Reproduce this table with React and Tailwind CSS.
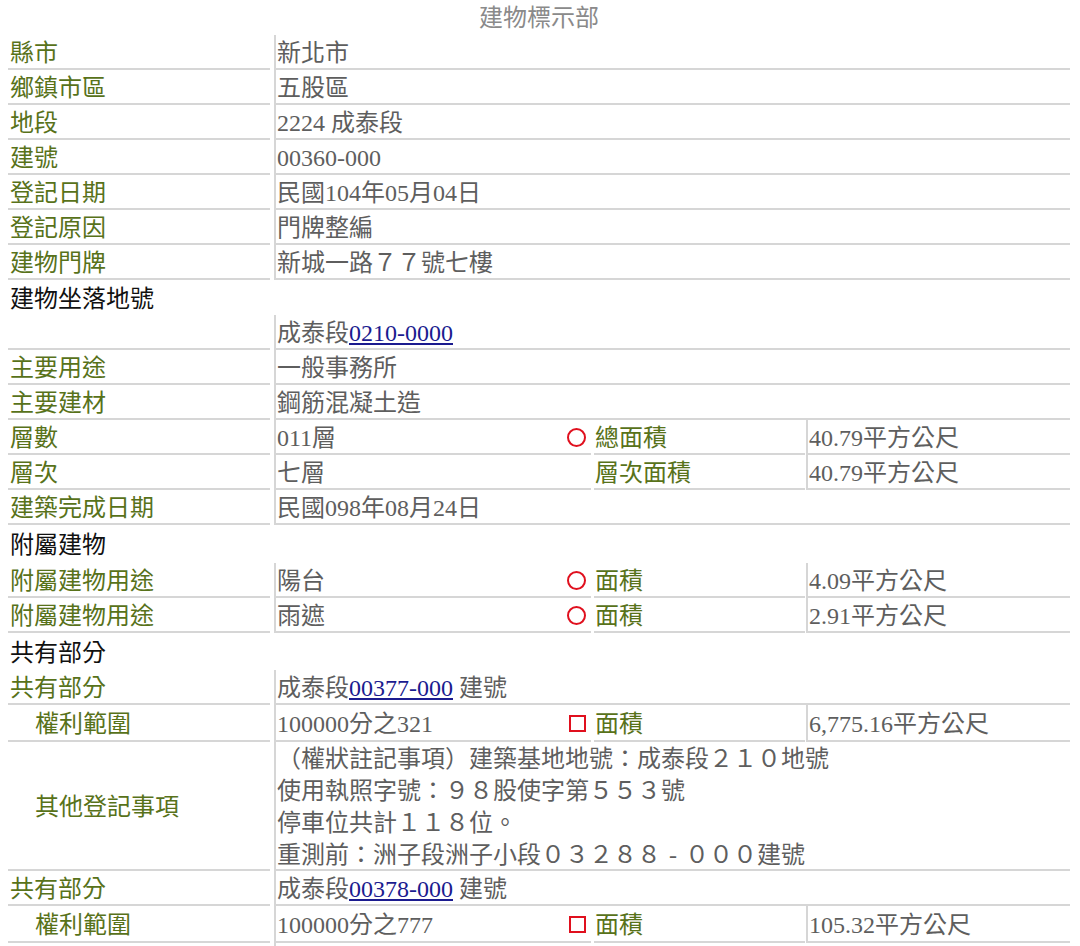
import React from "react";

const font = { fontFamily: '"Liberation Serif", "Noto Sans CJK TC", serif' };

function Mark({ type }) {
    if (type === "circle") {
        return <span className="inline-block w-[19px] h-[19px] rounded-full border-2 border-[#e0101e]" />;
    }
    if (type === "square") {
        return <span className="inline-block w-[17px] h-[17px] border-[2.5px] border-[#e0101e]" />;
    }
    return null;
}

function Link({ children }) {
    return <a href="#" className="text-[#1b1b8f] underline underline-offset-2">{children}</a>;
}

// label | value (spans rest)
function Row({ label, indent, h = "h-[35px]", children }) {
    return (
        <div className={`flex ${h}`}>
            <div className={`w-[262px] shrink-0 flex items-center pt-[2px] border-b-2 border-[#d6d6d6] text-[#58721a] ${indent ? "pl-[27px]" : "pl-[2px]"}`}>
                {label}
            </div>
            <div className="ml-[4px] flex-1 flex items-center pt-[2px] border-l-2 border-b-2 border-[#d6d6d6] pl-[1px] text-[#5e5e5e]">
                {children}
            </div>
        </div>
    );
}

// label | value + mark | label2 | value2
function Row4({ label, indent, value, mark, label2, value2, h = "h-[35px]" }) {
    return (
        <div className={`flex ${h}`}>
            <div className={`w-[262px] shrink-0 flex items-center pt-[2px] border-b-2 border-[#d6d6d6] text-[#58721a] ${indent ? "pl-[27px]" : "pl-[2px]"}`}>
                {label}
            </div>
            <div className="ml-[4px] w-[317px] shrink-0 flex items-center justify-between pt-[2px] border-l-2 border-b-2 border-[#d6d6d6] pl-[1px] pr-[5px] text-[#5e5e5e]">
                <span>{value}</span>
                <Mark type={mark} />
            </div>
            <div className="ml-[3px] w-[211px] shrink-0 flex items-center pt-[2px] border-b-2 border-[#d6d6d6] pl-[1px] text-[#58721a]">
                {label2}
            </div>
            <div className="ml-[1px] flex-1 flex items-center pt-[2px] border-l-2 border-b-2 border-[#d6d6d6] pl-[1px] text-[#5e5e5e]">
                {value2}
            </div>
        </div>
    );
}

function Header({ children, h = "h-[35px]" }) {
    return <div className={`${h} flex items-center pt-[2px] pl-[2px] text-[#111]`}>{children}</div>;
}

export default function App() {
    return (
        <div className="bg-white min-h-screen pl-[8px] pr-[10px] text-[24px] leading-[32px]" style={font}>
            <div className="h-[35px] flex items-center justify-center text-[#8a8a8a]">建物標示部</div>

            <Row label="縣市">新北市</Row>
            <Row label="鄉鎮市區">五股區</Row>
            <Row label="地段">2224 成泰段</Row>
            <Row label="建號">00360-000</Row>
            <Row label="登記日期">民國104年05月04日</Row>
            <Row label="登記原因">門牌整編</Row>
            <Row label="建物門牌">新城一路７７號七樓</Row>

            <Header>建物坐落地號</Header>
            <Row label="">成泰段<Link>0210-0000</Link></Row>
            <Row label="主要用途">一般事務所</Row>
            <Row label="主要建材">鋼筋混凝土造</Row>
            <Row4 label="層數" value="011層" mark="circle" label2="總面積" value2="40.79平方公尺" />
            <Row4 label="層次" value="七層" label2="層次面積" value2="40.79平方公尺" />
            <Row label="建築完成日期">民國098年08月24日</Row>

            <Header h="h-[38px]">附屬建物</Header>
            <Row4 label="附屬建物用途" value="陽台" mark="circle" label2="面積" value2="4.09平方公尺" />
            <Row4 label="附屬建物用途" value="雨遮" mark="circle" label2="面積" value2="2.91平方公尺" />

            <Header h="h-[37px]">共有部分</Header>
            <Row label="共有部分">成泰段<Link>00377-000</Link>&nbsp;建號</Row>
            <Row4 label="權利範圍" indent h="h-[37px]" value="100000分之321" mark="square" label2="面積" value2="6,775.16平方公尺" />
            <Row label="其他登記事項" indent h="h-[129px]">
                <div>
                    <div>（權狀註記事項）建築基地地號：成泰段２１０地號</div>
                    <div>使用執照字號：９８股使字第５５３號</div>
                    <div>停車位共計１１８位。</div>
                    <div>重測前：洲子段洲子小段０３２８８<span className="inline-block w-[24px] text-center">-</span>０００建號</div>
                </div>
            </Row>
            <Row label="共有部分">成泰段<Link>00378-000</Link>&nbsp;建號</Row>
            <Row4 label="權利範圍" indent h="h-[37px]" value="100000分之777" mark="square" label2="面積" value2="105.32平方公尺" />
            <Row label="" h="h-[60px]"></Row>
        </div>
    );
}
